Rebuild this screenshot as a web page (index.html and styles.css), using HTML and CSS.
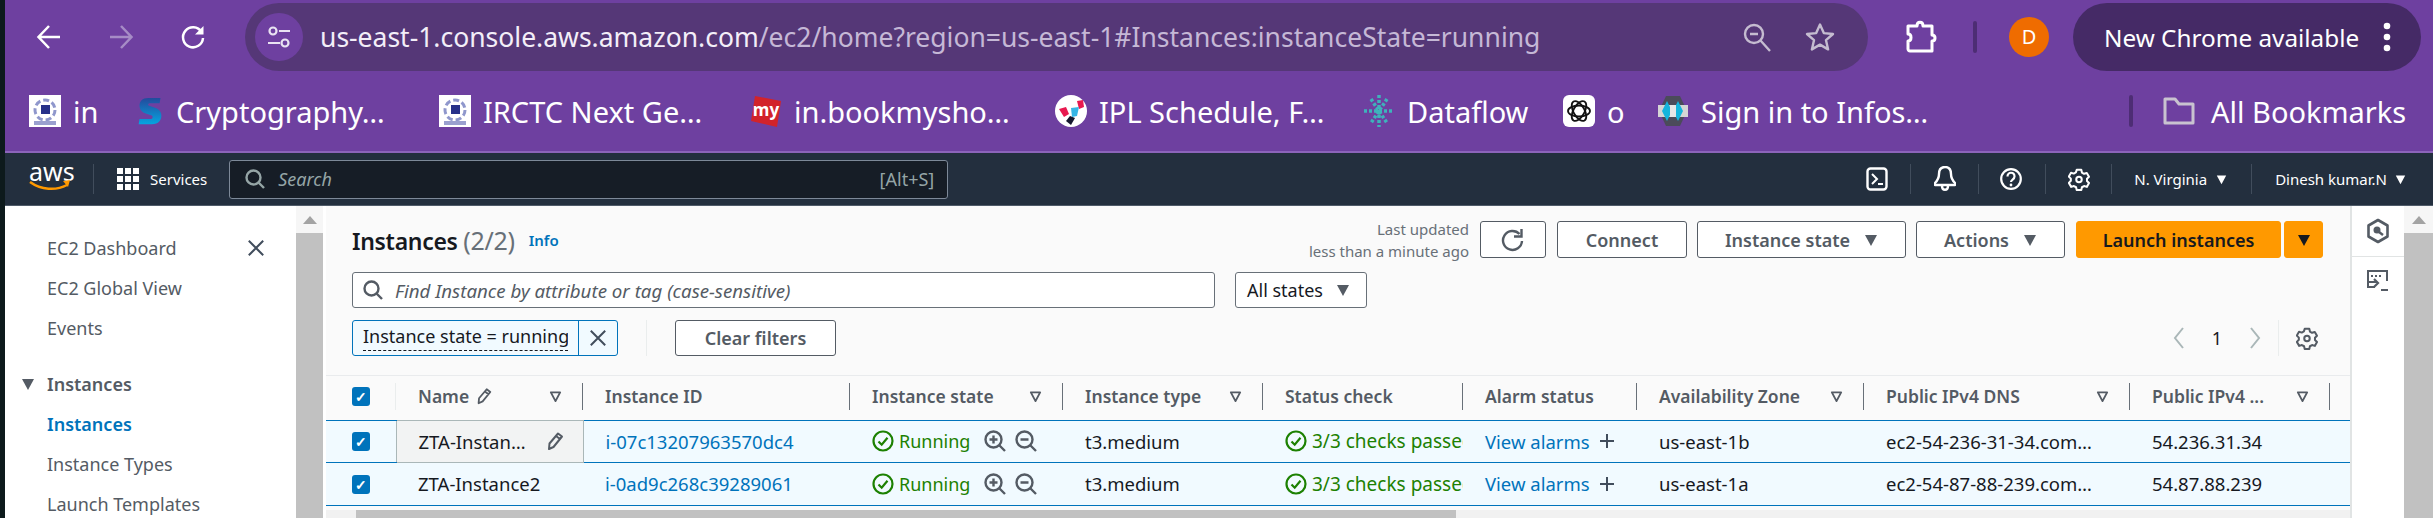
FILE: index.html
```html
<!DOCTYPE html>
<html lang="en">
  <head>
    <meta charset="UTF-8" />
    <title>Instances | EC2</title>
    <link rel="stylesheet" href="styles.css">
  </head>
  <body>
    <svg class="defs" width="0" height="0">
      <symbol id="caret" viewBox="0 0 14 14"><path d="M1 2h12L7 13z" fill="currentColor"/></symbol>
      <symbol id="sort" viewBox="0 0 14 14"><path d="M2 2.500h10L7 12z" fill="none" stroke="currentColor" stroke-width="2" stroke-linejoin="round"/></symbol>
      <symbol id="pencil" viewBox="0 0 20 20"><path d="M4 18l.5-5.500L13 2.500l4 3-8.500 10.500zM11 5l4 3" fill="none" stroke="currentColor" stroke-width="2" stroke-linejoin="round"/></symbol>
      <symbol id="ok" viewBox="0 0 22 22"><circle cx="11" cy="11" r="9.500" fill="none" stroke="currentColor" stroke-width="2.200"/><path d="M6.500 11.500l3.200 3.200 5.800-7" fill="none" stroke="currentColor" stroke-width="2.200"/></symbol>
      <symbol id="zoomin" viewBox="0 0 22 22"><circle cx="9.500" cy="9.500" r="8" fill="none" stroke="currentColor" stroke-width="2.400"/><path d="M15 15l6 6M5.500 9.500h8M9.500 5.500v8" fill="none" stroke="currentColor" stroke-width="2.400"/></symbol>
      <symbol id="zoomout" viewBox="0 0 22 22"><circle cx="9.500" cy="9.500" r="8" fill="none" stroke="currentColor" stroke-width="2.400"/><path d="M15 15l6 6M5.500 9.500h8" fill="none" stroke="currentColor" stroke-width="2.400"/></symbol>
      <symbol id="gear" viewBox="0 0 24 24"><path d="M9.500 2h5l.7 3 2.300 1.300 3-.9 2.400 4.200-2.200 2.200v2.400l2.200 2.200-2.400 4.200-3-.9-2.300 1.300-.7 3h-5l-.7-3-2.300-1.300-3 .9L.900 16.200l2.200-2.200v-2.400L.900 9.400l2.400-4.200 3 .9 2.300-1.300z" fill="none" stroke="currentColor" stroke-width="2.200" stroke-linejoin="round"/><circle cx="12" cy="12.500" r="3" fill="none" stroke="currentColor" stroke-width="2.200"/></symbol>
      <symbol id="search" viewBox="0 0 20 20"><circle cx="8.500" cy="8.500" r="7" fill="none" stroke="currentColor" stroke-width="2.400"/><path d="M13.500 13.500l5.500 5.500" fill="none" stroke="currentColor" stroke-width="2.400"/></symbol>
      <symbol id="close" viewBox="0 0 20 20"><path d="M2 2l16 16M18 2L2 18" fill="none" stroke="currentColor" stroke-width="2.200"/></symbol>
      <symbol id="irctc" viewBox="0 0 32 32"><rect width="32" height="32" fill="#fff"/><circle cx="16" cy="15" r="10" fill="none" stroke="#8f97cc" stroke-width="3" stroke-dasharray="6 3"/><rect x="12" y="10" width="9" height="9" fill="#27308a"/><rect x="5" y="26" width="22" height="4" fill="#9aa0cf"/></symbol>
    </svg>

    <div class="page">
      <div class="browser">
        <div class="toolbar">
          <span class="navBtn">
            <svg width="26" height="26" viewBox="0 0 26 26"><path d="M24 13H3M13 2L2.500 13 13 24" fill="none" stroke="#fff" stroke-width="2.500"/></svg>
          </span>
          <span class="navBtn">
            <svg width="26" height="26" viewBox="0 0 26 26"><path d="M2 13h21M13 2l10.500 11L13 24" fill="none" stroke="#a68cc6" stroke-width="2.500"/></svg>
          </span>
          <span class="navBtn">
            <svg width="26" height="26" viewBox="0 0 26 26"><path d="M21.500 8A10 10 0 1 0 23 14" fill="none" stroke="#fff" stroke-width="2.500"/><path d="M23.500 2v8.500H15z" fill="#fff"/></svg>
          </span>
          <div class="omnibox">
            <span class="siteChip">
              <svg width="24" height="24" viewBox="0 0 24 24"><g fill="none" stroke="#e9e2f2" stroke-width="2.200"><circle cx="6" cy="6" r="3.500"/><circle cx="18" cy="18" r="3.500"/><path d="M12 6h11M1 18h12"/></g></svg>
            </span>
            <span class="url">us-east-1.console.aws.amazon.com<span class="urlRest">/ec2/home?region=us-east-1#Instances:instanceState=running</span></span>
            <svg class="zoomOut" width="30" height="30" viewBox="0 0 30 30"><circle cx="12" cy="12" r="9" fill="none" stroke="#c5bcd0" stroke-width="2.400"/><path d="M18.500 18.500L28 29M8 12h8" fill="none" stroke="#c5bcd0" stroke-width="2.400"/></svg>
            <svg class="star" width="32" height="32" viewBox="0 0 32 32"><path d="M16 3.500l3.800 8.600 9.200.9-7 6.200 2.100 9.200-8.100-4.800-8.100 4.800 2.100-9.200-7-6.200 9.200-.9z" fill="none" stroke="#c5bcd0" stroke-width="2.400" stroke-linejoin="round"/></svg>
          </div>
          <svg class="extIcon" width="32" height="34" viewBox="0 0 32 34"><path d="M3 6h9c0-5 6-5 6 0h9v9c4 0 4 6 0 6v10H5c-1 0-2-1-2-2v-8c4 0 4-7 0-7z" fill="none" stroke="#fff" stroke-width="3" stroke-linejoin="round"/></svg>
          <span class="toolSep"></span>
          <span class="avatar">D</span>
          <div class="updatePill">
            <span>New Chrome available</span>
            <svg width="8" height="30" viewBox="0 0 8 30"><circle cx="4" cy="4" r="3.300" fill="#fff"/><circle cx="4" cy="15" r="3.300" fill="#fff"/><circle cx="4" cy="26" r="3.300" fill="#fff"/></svg>
          </div>
        </div>

        <div class="bookmarks">
          <span class="bm"><svg class="fav"><use href="#irctc"/></svg>in</span>
          <span class="bm"><svg class="fav favS" viewBox="0 0 32 32"><defs><linearGradient id="sGrad" x1="0" y1="0" x2="0" y2="1"><stop offset="0" stop-color="#234a9c"/><stop offset="1" stop-color="#06a4e0"/></linearGradient></defs><path d="M28 1H14C7 1 4 5 4 10c0 5 4 8 8 9l6 2c2 1 1 4-1 4H4l-1 6h15c8 0 11-5 11-10 0-5-4-8-8-9l-6-2c-2-1-1-3 1-3h11z" fill="url(#sGrad)"/></svg>Cryptography…</span>
          <span class="bm"><svg class="fav"><use href="#irctc"/></svg>IRCTC Next Ge…</span>
          <span class="bm"><svg class="fav" viewBox="0 0 32 32"><path d="M5 1l26 5-4 26-26-6z" fill="#d2232a"/><text x="16" y="21" text-anchor="middle" class="favText">my</text></svg>in.bookmysho…</span>
          <span class="bm"><svg class="fav" viewBox="0 0 32 32"><circle cx="16" cy="16" r="16" fill="#fff"/><path d="M4 14l7-2 3 7-5 3z" fill="#e8194f"/><path d="M22 6l6-1 1 7-5 2z" fill="#e8194f"/><path d="M16 13l8-1-2 9-5 1z" fill="#35b6e6"/><path d="M15 21l5 2-4 7-5-4z" fill="#16192f"/></svg>IPL Schedule, F…</span>
          <span class="bm"><svg class="fav" viewBox="0 0 32 32"><g fill="none" stroke="#3eb3bb" stroke-width="3.500" stroke-dasharray="3 2"><path d="M16 0v32M1 16h30M8 4l16 24M24 4L8 28"/></g></svg>Dataflow</span>
          <span class="bm"><svg class="fav" viewBox="0 0 32 32"><rect width="32" height="32" rx="6" fill="#fff"/><g fill="none" stroke="#111" stroke-width="1.800"><ellipse cx="16" cy="16" rx="11" ry="5.500"/><ellipse cx="16" cy="16" rx="11" ry="5.500" transform="rotate(60 16 16)"/><ellipse cx="16" cy="16" rx="11" ry="5.500" transform="rotate(120 16 16)"/></g></svg>o</span>
          <span class="bm bmLast"><svg class="fav" viewBox="0 0 32 32"><path d="M9 1h14l7 15-7 15H9L2 16z" fill="#4b4b5a"/><rect x="1" y="10" width="30" height="12" fill="#d5d5d5"/><path d="M10 6l5 10-5 10-5-10zM21 6l5 10-5 10-5-10z" fill="#15b5dc"/><path d="M13 10h6v12h-6z" fill="#e6e6e6"/></svg>Sign in to Infos…</span>
          <span class="bmSep"></span>
          <svg class="folder" width="32" height="28" viewBox="0 0 32 28"><path d="M2 2h10l4 5h14v19H2z" fill="none" stroke="#c9c3d0" stroke-width="3" stroke-linejoin="round"/></svg>
          <span class="bmAll">All Bookmarks</span>
        </div>
      </div>

      <nav class="awsNav">
        <span class="awsLogo">aws
          <svg width="42" height="13" viewBox="0 0 42 13"><path d="M1 2c11 8 26 9 37 3" fill="none" stroke="#f90" stroke-width="2.500"/><path d="M34 1l7-1-2 7z" fill="#f90"/></svg>
        </span>
        <span class="navSep logoSep"></span>
        <svg class="gridIcon" width="22" height="22" viewBox="0 0 22 22"><path d="M0 0h6v6H0zM8 0h6v6H8zM16 0h6v6h-6zM0 8h6v6H0zM8 8h6v6H8zM16 8h6v6h-6zM0 16h6v6H0zM8 16h6v6H8zM16 16h6v6h-6z" fill="#fff"/></svg>
        <span class="navServices">Services</span>
        <div class="navSearch">
          <svg class="navSearchIcon" width="20" height="20"><use href="#search"/></svg>
          <span class="navSearchText">Search</span>
          <span class="navShortcut">[Alt+S]</span>
        </div>
        <svg class="navIcon termIcon" width="22" height="24" viewBox="0 0 22 24"><rect x="1.500" y="1.500" width="19" height="21" rx="3" fill="none" stroke="#fff" stroke-width="2.400"/><path d="M6 7l5 5-5 5M12 17h5" fill="none" stroke="#fff" stroke-width="2"/></svg>
        <span class="navSep"></span>
        <svg class="navIcon bellIcon" width="22" height="26" viewBox="0 0 22 26"><path d="M11 1c4 0 6 3 6 7 0 5 2 7 4 9v2H1v-2c2-2 4-4 4-9 0-4 2-7 6-7zM8 20c0 5 6 5 6 0" fill="none" stroke="#fff" stroke-width="2.400" stroke-linejoin="round"/></svg>
        <span class="navSep"></span>
        <svg class="navIcon helpIcon" width="22" height="22" viewBox="0 0 22 22"><circle cx="11" cy="11" r="9.800" fill="none" stroke="#fff" stroke-width="2.200"/><path d="M7.500 8.500c0-5 7-5 7 0 0 3-3.500 3-3.500 5.500" fill="none" stroke="#fff" stroke-width="2.200"/><circle cx="11" cy="17" r="1.400" fill="#fff"/></svg>
        <span class="navSep"></span>
        <svg class="navIcon gearIcon" width="22" height="24"><use href="#gear"/></svg>
        <span class="navSep"></span>
        <span class="navRegion">N. Virginia<svg width="11" height="11"><use href="#caret"/></svg></span>
        <span class="navSep"></span>
        <span class="navUser">Dinesh kumar.N<svg width="11" height="11"><use href="#caret"/></svg></span>
      </nav>

      <div class="content">
        <aside class="sidebar">
          <ul class="sideList">
            <li>EC2 Dashboard</li>
            <li>EC2 Global View</li>
            <li>Events</li>
            <li class="sideHead"><svg width="14" height="14"><use href="#caret"/></svg>Instances</li>
            <li class="sideActive">Instances</li>
            <li>Instance Types</li>
            <li>Launch Templates</li>
          </ul>
          <svg class="sideClose" width="18" height="20"><use href="#close"/></svg>
        </aside>
        <div class="vScroll">
          <span class="scrollUp"></span>
          <span class="scrollThumb"></span>
        </div>

        <main class="main">
          <div class="titleRow">
            <h1 class="title">Instances <span class="count">(2/2)</span></h1>
            <a class="info">Info</a>
            <div class="actions">
              <span class="updated">Last updated<br>less than a minute ago</span>
              <button class="btn btnRefresh">
                <svg width="24" height="26" viewBox="0 0 24 26"><path d="M18.500 7A9.500 9.500 0 1 0 21 14" fill="none" stroke="#545b64" stroke-width="2.400"/><path d="M20.500 2v7.500H13" fill="none" stroke="#545b64" stroke-width="2.400"/></svg>
              </button>
              <button class="btn btnConnect">Connect</button>
              <button class="btn btnState">Instance state<svg width="14" height="14"><use href="#caret"/></svg></button>
              <button class="btn btnActions">Actions<svg width="14" height="14"><use href="#caret"/></svg></button>
              <button class="btn btnLaunch">Launch instances</button>
              <button class="btn btnSplit"><svg width="14" height="14"><use href="#caret"/></svg></button>
            </div>
          </div>

          <div class="filterRow">
            <div class="findBox">
              <svg width="20" height="20"><use href="#search"/></svg>
              <span>Find Instance by attribute or tag (case-sensitive)</span>
            </div>
            <div class="stateSelect">All states<svg width="14" height="14"><use href="#caret"/></svg></div>
          </div>

          <div class="tokenRow">
            <div class="token">
              <span class="tokenText"><span class="tokenLabel">Instance state = running</span></span>
              <span class="tokenClose"><svg width="18" height="18"><use href="#close"/></svg></span>
            </div>
            <span class="tokenSep"></span>
            <button class="btn btnClear">Clear filters</button>
            <div class="pager">
              <svg width="12" height="24" viewBox="0 0 12 24"><path d="M10 2L2 12l8 10" fill="none" stroke="#aab7b8" stroke-width="2"/></svg>
              <span class="pageNo">1</span>
              <svg width="12" height="24" viewBox="0 0 12 24"><path d="M2 2l8 10-8 10" fill="none" stroke="#aab7b8" stroke-width="2"/></svg>
              <span class="pagerSep"></span>
              <svg class="pagerGear" width="22" height="24"><use href="#gear"/></svg>
            </div>
          </div>

          <table class="grid">
            <colgroup>
              <col class="cCheck"><col class="cName"><col class="cId"><col class="cState"><col class="cType"><col class="cStatus"><col class="cAlarm"><col class="cZone"><col class="cDns"><col class="cIp"><col class="cEnd">
            </colgroup>
            <thead>
              <tr>
                <th class="checkCell"><span class="thIn thFaint"><span class="check">✓</span></span></th>
                <th><span class="thIn"><span class="thName">Name<svg width="18" height="18"><use href="#pencil"/></svg></span><svg class="sort" width="13" height="13"><use href="#sort"/></svg></span></th>
                <th><span class="thIn">Instance ID</span></th>
                <th><span class="thIn">Instance state<svg class="sort" width="13" height="13"><use href="#sort"/></svg></span></th>
                <th><span class="thIn">Instance type<svg class="sort" width="13" height="13"><use href="#sort"/></svg></span></th>
                <th><span class="thIn">Status check</span></th>
                <th><span class="thIn">Alarm status</span></th>
                <th><span class="thIn">Availability Zone<svg class="sort" width="13" height="13"><use href="#sort"/></svg></span></th>
                <th><span class="thIn">Public IPv4 DNS<svg class="sort" width="13" height="13"><use href="#sort"/></svg></span></th>
                <th><span class="thIn">Public IPv4 ...<svg class="sort" width="13" height="13"><use href="#sort"/></svg></span></th>
                <th></th>
              </tr>
            </thead>
            <tbody>
              <tr class="rowOne">
                <td class="checkCell"><span class="check">✓</span></td>
                <td class="nameEdit"><span class="nameWrap">ZTA-Instan…<svg width="20" height="20"><use href="#pencil"/></svg></span></td>
                <td><a class="link">i-07c13207963570dc4</a></td>
                <td class="ok"><span class="stateWrap"><svg width="22" height="22"><use href="#ok"/></svg>Running<svg class="mag firstMag" width="22" height="22"><use href="#zoomin"/></svg><svg class="mag" width="22" height="22"><use href="#zoomout"/></svg></span></td>
                <td>t3.medium</td>
                <td class="ok"><span class="stateWrap statusWrap"><svg width="22" height="22"><use href="#ok"/></svg>3/3 checks passed</span></td>
                <td><span class="alarmWrap"><a class="link">View alarms</a><svg width="16" height="16" viewBox="0 0 16 16"><path d="M8 1v14M1 8h14" stroke="#414d5c" stroke-width="2"/></svg></span></td>
                <td>us-east-1b</td>
                <td>ec2-54-236-31-34.com…</td>
                <td>54.236.31.34</td>
                <td></td>
              </tr>
              <tr class="rowTwo">
                <td class="checkCell"><span class="check">✓</span></td>
                <td>ZTA-Instance2</td>
                <td><a class="link">i-0ad9c268c39289061</a></td>
                <td class="ok"><span class="stateWrap"><svg width="22" height="22"><use href="#ok"/></svg>Running<svg class="mag firstMag" width="22" height="22"><use href="#zoomin"/></svg><svg class="mag" width="22" height="22"><use href="#zoomout"/></svg></span></td>
                <td>t3.medium</td>
                <td class="ok"><span class="stateWrap statusWrap"><svg width="22" height="22"><use href="#ok"/></svg>3/3 checks passed</span></td>
                <td><span class="alarmWrap"><a class="link">View alarms</a><svg width="16" height="16" viewBox="0 0 16 16"><path d="M8 1v14M1 8h14" stroke="#414d5c" stroke-width="2"/></svg></span></td>
                <td>us-east-1a</td>
                <td>ec2-54-87-88-239.com…</td>
                <td>54.87.88.239</td>
                <td></td>
              </tr>
            </tbody>
          </table>

          <div class="hScroll"><span class="hThumb"></span></div>
        </main>

        <aside class="toolsPanel">
          <div class="toolSlot">
            <svg width="24" height="26" viewBox="0 0 24 26"><path d="M12 2l9.500 5.500v11L12 24l-9.500-5.500v-11z" fill="none" stroke="#545b64" stroke-width="2.600" stroke-linejoin="round"/><circle cx="11" cy="12" r="3.500" fill="#545b64"/><path d="M13 14l4 3" stroke="#545b64" stroke-width="2.400"/></svg>
          </div>
          <div class="toolSlot toolSlotTwo">
            <svg width="22" height="24" viewBox="0 0 22 24"><path d="M8 17H1V1h19v10" fill="none" stroke="#545b64" stroke-width="2"/><path d="M4 5h2v2H4zM8 5h2v2H8zM12 5h2v2h-2z" fill="#545b64"/><path d="M2 12h8M7 9l4 4-4 4M14 20h7" fill="none" stroke="#545b64" stroke-width="2.200"/></svg>
          </div>
        </aside>
        <div class="pageScroll">
          <span class="scrollUp"></span>
          <span class="scrollThumb"></span>
        </div>
      </div>
    </div>
  </body>
</html>
```

FILE: styles.css
```css
body {
  margin: 0;
  padding: 0;
  background-color: #0d1a1c;
  font-family: "Noto Sans", "Open Sans", sans-serif;
  overflow: hidden;
}

.defs {
  position: absolute;
}

.page {
  width: 2428px;
  height: 518px;
  margin-left: 5px;
  display: flex;
  flex-direction: column;
  overflow: hidden;
}

/* browser chrome */
.browser {
  height: 151px;
  background-color: #6e40a0;
  border-bottom: 2px solid #8c64ba;
  color: #fff;
}

.toolbar {
  height: 68px;
  padding-top: 3px;
  padding-left: 8px;
  display: flex;
  align-items: center;
}

.navBtn {
  width: 72px;
  display: flex;
  justify-content: center;
}

.omnibox {
  width: 1623px;
  height: 68px;
  margin-left: 16px;
  box-sizing: border-box;
  padding-left: 10px;
  background-color: #553777;
  border-radius: 34px;
  display: flex;
  align-items: center;
}

.siteChip {
  width: 48px;
  height: 48px;
  flex: none;
  border-radius: 50%;
  background-color: #6e40a0;
  display: flex;
  align-items: center;
  justify-content: center;
}

.url {
  margin-left: 17px;
  font-size: 26.5px;
  white-space: nowrap;
  color: #f3eef8;
}

.urlRest {
  color: #c5b8d6;
}

.zoomOut {
  margin-left: auto;
}

.star {
  margin-left: 32px;
  margin-right: 32px;
}

.extIcon {
  margin-left: 37px;
}

.toolSep {
  width: 4px;
  height: 32px;
  margin-left: 36px;
  border-radius: 2px;
  background-color: #4d2d74;
}

.avatar {
  width: 40px;
  height: 40px;
  margin-left: 32px;
  border-radius: 50%;
  background-color: #ef6c00;
  font-size: 20px;
  line-height: 40px;
  text-align: center;
}

.updatePill {
  width: 348px;
  height: 68px;
  margin-left: 24px;
  box-sizing: border-box;
  padding-left: 31px;
  border-radius: 34px;
  background-color: #452a66;
  font-size: 24.3px;
  display: flex;
  align-items: center;
  white-space: nowrap;
}

.updatePill svg {
  margin-left: auto;
  margin-right: 30px;
}

.bookmarks {
  height: 80px;
  padding-left: 24px;
  display: grid;
  grid-template-columns: 107px 303px 311px 305px 308px 200px 94px 472px 4px auto auto;
  justify-content: start;
  align-items: center;
  font-size: 29px;
  white-space: nowrap;
}

.bm {
  display: flex;
  align-items: center;
  gap: 12px;
}

.fav {
  width: 32px;
  height: 32px;
  flex: none;
}

.favS {
  width: 28px;
}

.favText {
  font-family: "Noto Sans", sans-serif;
  font-size: 17px;
  font-weight: 700;
  fill: #fff;
}

.bmSep {
  width: 4px;
  height: 32px;
  border-radius: 2px;
  background-color: #4d2d74;
}

.folder {
  margin-left: 30px;
}

.bmAll {
  margin-left: 16px;
}

/* aws top bar */
.awsNav {
  height: 52px;
  background-color: #232f3e;
  border-bottom: 1px solid #4f5b69;
  color: #fff;
  display: flex;
  align-items: center;
  font-size: 15px;
}

.awsLogo {
  width: 42px;
  margin-left: 24px;
  font-size: 25px;
  line-height: 22px;
  text-align: center;
  position: relative;
  top: -3px;
}

.awsLogo svg {
  display: block;
  margin-top: -2px;
}

.navSep {
  width: 1px;
  height: 30px;
  background-color: #414d5c;
}

.logoSep {
  margin-left: 22px;
}

.gridIcon {
  margin-left: 23px;
}

.navServices {
  margin-left: 11px;
}

.navSearch {
  width: 719px;
  height: 39px;
  margin-left: 22px;
  box-sizing: border-box;
  padding: 0 13px 0 15px;
  background-color: #161d26;
  border: 1px solid #7d8998;
  border-radius: 3px;
  display: flex;
  align-items: center;
  color: #95a5a6;
  font-size: 18px;
}

.navSearchText {
  margin-left: 13px;
  font-style: italic;
}

.navShortcut {
  margin-left: auto;
}

.termIcon {
  margin-left: 918px;
  margin-right: 22px;
}

.bellIcon {
  margin-left: 23px;
  margin-right: 22px;
}

.helpIcon {
  margin-left: 21px;
  margin-right: 23px;
}

.gearIcon {
  margin-left: 22px;
  margin-right: 21px;
}

.navRegion {
  margin-left: 22px;
  margin-right: 24px;
  display: flex;
  align-items: center;
  gap: 9px;
}

.navUser {
  margin-left: 23px;
  display: flex;
  align-items: center;
  gap: 8px;
}

/* content */
.content {
  height: 312px;
  display: flex;
  background-color: #fff;
}

.sidebar {
  width: 291px;
  flex: none;
  position: relative;
  color: #545b64;
  font-size: 18px;
}

.sideList {
  list-style: none;
  margin: 0;
  padding: 22px 0 0 42px;
}

.sideList li {
  height: 40px;
  line-height: 40px;
  white-space: nowrap;
}

.sideList .sideHead {
  margin-top: 16px;
  margin-left: -26px;
  font-weight: 600;
  display: flex;
  align-items: center;
  gap: 12px;
}

.sideList .sideActive {
  font-weight: 600;
  color: #0073bb;
}

.sideClose {
  position: absolute;
  top: 32px;
  left: 242px;
  color: #414d5c;
}

.vScroll {
  width: 27px;
  flex: none;
  background-color: #f6f6f6;
  display: flex;
  flex-direction: column;
  align-items: center;
}

.scrollUp {
  width: 0;
  height: 0;
  margin: 10px 0 9px;
  border-left: 7px solid transparent;
  border-right: 7px solid transparent;
  border-bottom: 8px solid #a3a3a3;
}

.scrollThumb {
  flex: 1;
  width: 100%;
  background-color: #c1c1c1;
}

.main {
  width: 2024px;
  flex: none;
  margin-left: 3px;
  background-color: #fafafa;
  color: #16191f;
  font-size: 18px;
  display: flex;
  flex-direction: column;
}

.titleRow {
  height: 37px;
  margin-top: 15px;
  padding-left: 26px;
  display: flex;
  align-items: center;
}

.title {
  margin: 0;
  font-size: 23px;
  font-weight: 600;
  letter-spacing: -0.3px;
  white-space: nowrap;
}

.count {
  font-size: 25px;
  font-weight: 400;
  color: #687078;
}

.info {
  margin-left: 14px;
  font-size: 15px;
  font-weight: 600;
  color: #0073bb;
}

.actions {
  margin-left: auto;
  margin-right: 27px;
  display: flex;
  align-items: center;
}

.updated {
  margin-right: 11px;
  text-align: right;
  font-size: 15px;
  line-height: 22px;
  color: #687078;
  white-space: nowrap;
}

.btn {
  height: 37px;
  box-sizing: border-box;
  padding: 0;
  background-color: #fff;
  border: 1px solid #545b64;
  border-radius: 3px;
  color: #545b64;
  font-family: inherit;
  font-size: 18px;
  font-weight: 600;
  display: flex;
  align-items: center;
  justify-content: center;
  gap: 14px;
  white-space: nowrap;
}

.btnRefresh {
  width: 66px;
}

.btnConnect {
  width: 130px;
  margin-left: 11px;
}

.btnState {
  width: 209px;
  margin-left: 10px;
}

.btnActions {
  width: 149px;
  margin-left: 10px;
}

.btnLaunch {
  width: 205px;
  margin-left: 11px;
  background-color: #f90;
  border-color: #f90;
  color: #16191f;
}

.btnSplit {
  width: 39px;
  margin-left: 3px;
  background-color: #f90;
  border-color: #f90;
  color: #16191f;
}

.filterRow {
  margin-top: 14px;
  padding-left: 26px;
  display: flex;
  gap: 20px;
}

.findBox {
  width: 863px;
  height: 36px;
  box-sizing: border-box;
  padding-left: 10px;
  background-color: #fff;
  border: 1px solid #687078;
  border-radius: 3px;
  display: flex;
  align-items: center;
  gap: 12px;
  color: #545b64;
  font-style: italic;
  font-size: 18.7px;
}

.stateSelect {
  width: 132px;
  height: 36px;
  box-sizing: border-box;
  padding-left: 11px;
  background-color: #fff;
  border: 1px solid #687078;
  border-radius: 3px;
  display: flex;
  align-items: center;
  gap: 13px;
}

.stateSelect svg {
  color: #545b64;
}

.tokenRow {
  height: 36px;
  margin-top: 12px;
  padding-left: 26px;
  display: flex;
  align-items: center;
}

.token {
  width: 266px;
  height: 36px;
  box-sizing: border-box;
  background-color: #f1faff;
  border: 1px solid #0073bb;
  border-radius: 3px;
  display: flex;
  align-items: center;
}

.tokenText {
  width: 226px;
  height: 34px;
  flex: none;
  box-sizing: border-box;
  padding-left: 10px;
  border-right: 1px solid #0073bb;
  font-size: 18px;
  line-height: 30px;
  white-space: nowrap;
  overflow: hidden;
}

.tokenLabel {
  display: inline-block;
  width: 205px;
  height: 29px;
  overflow: hidden;
  border-bottom: 1px dashed #16191f;
}

.tokenClose {
  flex: 1;
  display: flex;
  justify-content: center;
  color: #414d5c;
}

.tokenSep {
  width: 1px;
  height: 36px;
  margin-left: 28px;
  background-color: #eaeded;
}

.btnClear {
  width: 161px;
  height: 36px;
  margin-left: 28px;
}

.pager {
  margin-left: auto;
  margin-right: 32px;
  display: flex;
  align-items: center;
  height: 36px;
}

.pageNo {
  width: 64px;
  text-align: center;
}

.pagerSep {
  width: 1px;
  height: 36px;
  margin-left: 17px;
  background-color: #eaeded;
}

.pagerGear {
  margin-left: 17px;
  color: #545b64;
}

/* instances table */
.grid {
  width: 2024px;
  margin-top: 19px;
  table-layout: fixed;
  border-collapse: collapse;
  border-top: 1px solid #e9ebed;
}

.cCheck { width: 70px; }
.cName { width: 187px; }
.cId { width: 267px; }
.cState { width: 213px; }
.cType { width: 200px; }
.cStatus { width: 200px; }
.cAlarm { width: 174px; }
.cZone { width: 227px; }
.cDns { width: 266px; }
.cIp { width: 200px; }
.cEnd { width: 20px; }

.grid th {
  height: 40px;
  padding: 0 0 4px;
  font-size: 17.5px;
  font-weight: 600;
  color: #545b64;
  text-align: left;
  white-space: nowrap;
}

.thIn {
  height: 27px;
  box-sizing: border-box;
  padding: 0 20px 0 22px;
  border-right: 1px solid #687078;
  display: flex;
  align-items: center;
}

.thFaint {
  padding: 0;
  border-right-color: #eaeded;
}

.thName {
  display: flex;
  align-items: center;
  gap: 6px;
}

.sort {
  margin-left: auto;
}

.grid td {
  height: 40px;
  padding: 0 0 1px 22px;
  background-color: #f1faff;
  border-top: 1px solid #0073bb;
  border-bottom: 1px solid #0073bb;
  font-size: 18.5px;
  white-space: nowrap;
  overflow: hidden;
}

.rowTwo td {
  height: 41px;
}

.grid td.checkCell {
  padding: 0;
}

.grid th.checkCell .thIn {
  width: 70px;
}

.check {
  width: 18px;
  height: 19px;
  margin-left: 26px;
  background-color: #0073bb;
  border-radius: 3px;
  color: #fff;
  font-size: 14px;
  font-weight: 700;
  line-height: 19px;
  text-align: center;
  display: block;
}

.grid td.nameEdit {
  background-color: #f2f3f3;
  border-left: 1px solid #aab7b8;
  border-right: 1px solid #aab7b8;
  border-top-color: #aab7b8;
  border-bottom-color: #aab7b8;
}

.nameWrap {
  width: 146px;
  display: flex;
  justify-content: space-between;
  align-items: center;
}

.nameWrap svg {
  color: #545b64;
}

.link {
  color: #0073bb;
}

.ok {
  color: #1d8102;
}

.stateWrap {
  display: flex;
  align-items: center;
  gap: 5px;
  font-size: 18px;
}

.stateWrap svg {
  flex: none;
}

.statusWrap {
  width: 178px;
  font-size: 19px;
  overflow: hidden;
}

.mag {
  color: #545b64;
  margin-left: 4px;
}

.firstMag {
  margin-left: 9px;
}

.alarmWrap {
  display: flex;
  align-items: center;
  gap: 9px;
}

.hScroll {
  height: 10px;
  margin-top: 4px;
  padding-left: 30px;
  background-color: #f1f1f1;
}

.hThumb {
  display: block;
  width: 1100px;
  height: 10px;
  background-color: #c1c1c1;
}

/* right side */
.toolsPanel {
  width: 54px;
  flex: none;
  box-sizing: border-box;
  border-left: 2px solid #e1e4e4;
}

.toolSlot {
  height: 50px;
  display: flex;
  align-items: center;
  justify-content: center;
  border-bottom: 1px solid #e1e4e4;
}

.toolSlotTwo {
  border-bottom: none;
}

.pageScroll {
  width: 29px;
  flex: none;
  display: flex;
  flex-direction: column;
  align-items: center;
  background-color: #f6f6f6;
}
```
